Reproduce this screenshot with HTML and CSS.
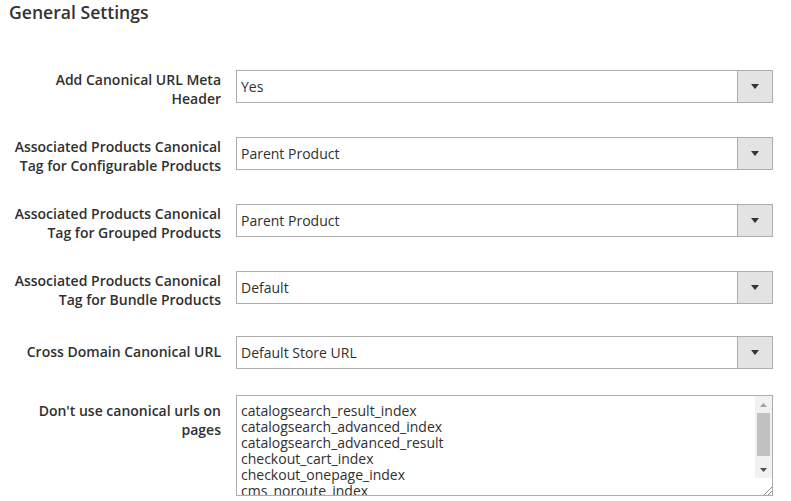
FILE: index.html
```html
<!DOCTYPE html>
<html lang="en">
<head>
  <meta charset="UTF-8" />
  <title>General Settings</title>
  <link rel="stylesheet" href="styles.css">
</head>
<body>
  <h2 class="section-title">General Settings</h2>

  <div class="form">
    <div class="row">
      <label class="label">Add Canonical URL Meta Header</label>
      <div class="select">
        <span class="select-value">Yes</span>
        <span class="select-btn"><svg width="8" height="5" viewBox="0 0 8 5"><path d="M0 0h8L4 5z" fill="#333"/></svg></span>
      </div>
    </div>

    <div class="row">
      <label class="label">Associated Products Canonical Tag for Configurable Products</label>
      <div class="select">
        <span class="select-value">Parent Product</span>
        <span class="select-btn"><svg width="8" height="5" viewBox="0 0 8 5"><path d="M0 0h8L4 5z" fill="#333"/></svg></span>
      </div>
    </div>

    <div class="row">
      <label class="label">Associated Products Canonical Tag for Grouped Products</label>
      <div class="select">
        <span class="select-value">Parent Product</span>
        <span class="select-btn"><svg width="8" height="5" viewBox="0 0 8 5"><path d="M0 0h8L4 5z" fill="#333"/></svg></span>
      </div>
    </div>

    <div class="row row-tight">
      <label class="label">Associated Products Canonical Tag for Bundle Products</label>
      <div class="select">
        <span class="select-value">Default</span>
        <span class="select-btn"><svg width="8" height="5" viewBox="0 0 8 5"><path d="M0 0h8L4 5z" fill="#333"/></svg></span>
      </div>
    </div>

    <div class="row">
      <label class="label label-pad">Cross Domain Canonical URL</label>
      <div class="select">
        <span class="select-value">Default Store URL</span>
        <span class="select-btn"><svg width="8" height="5" viewBox="0 0 8 5"><path d="M0 0h8L4 5z" fill="#333"/></svg></span>
      </div>
    </div>

    <div class="row">
      <label class="label label-pad">Don't use canonical urls on pages</label>
      <div class="textarea">
        <div class="textarea-lines">
          <div>catalogsearch_result_index</div>
          <div>catalogsearch_advanced_index</div>
          <div>catalogsearch_advanced_result</div>
          <div>checkout_cart_index</div>
          <div>checkout_onepage_index</div>
          <div>cms_noroute_index</div>
        </div>
        <div class="scrollbar">
          <div class="sb-btn"><svg width="7" height="4" viewBox="0 0 7 4"><path d="M0 4h7L3.5 0z" fill="#a3a3a3"/></svg></div>
          <div class="sb-track"><div class="sb-thumb"></div></div>
          <div class="sb-btn"><svg width="7" height="4" viewBox="0 0 7 4"><path d="M0 0h7L3.5 4z" fill="#505050"/></svg></div>
          <div class="sb-corner"><svg width="10" height="10" viewBox="0 0 10 10"><path d="M2 10L10 2M6 10L10 6" stroke="#8a8a8a" stroke-width="1"/></svg></div>
        </div>
      </div>
    </div>
  </div>
</body>
</html>
```

FILE: styles.css
```css
body {
  margin: 0;
  font-family: "Open Sans", Arial, sans-serif;
  color: #303030;
  background: #fff;
}
.section-title {
  margin: 0;
  padding: 0 0 0 9px;
  font-size: 17.6px;
  font-weight: 600;
  line-height: 24px;
  color: #333;
}
.form {
  padding-top: 46px;
}
.row {
  display: flex;
  align-items: flex-start;
  gap: 15px;
  margin-bottom: 26px;
}
.row-tight {
  margin-bottom: 24px;
}
.label {
  width: 212px;
  margin-left: 9px;
  text-align: right;
  font-size: 14px;
  font-weight: 600;
  line-height: 19px;
  padding-bottom: 3px;
}
.label-pad {
  padding-top: 6px;
}
.select {
  width: 537px;
  height: 33px;
  box-sizing: border-box;
  display: flex;
  border: 1px solid #adadad;
  font-size: 14px;
}
.select-value {
  flex: 1;
  padding-left: 4px;
  line-height: 31px;
}
.select-btn {
  width: 34px;
  background: #e3e3e3;
  border-left: 1px solid #adadad;
  display: flex;
  align-items: center;
  justify-content: center;
}
.textarea {
  width: 537px;
  height: 101px;
  box-sizing: border-box;
  display: flex;
  border: 1px solid #adadad;
}
.textarea-lines {
  flex: 1;
  overflow: hidden;
  padding: 7px 4px 0;
  font-size: 14px;
  line-height: 16px;
}
.scrollbar {
  width: 17px;
  display: flex;
  flex-direction: column;
  background: #f1f1f1;
}
.sb-btn {
  height: 17px;
  display: flex;
  align-items: center;
  justify-content: center;
}
.sb-track {
  flex: 1;
  padding: 0 2px;
}
.sb-thumb {
  height: 43px;
  background: #c1c1c1;
}
.sb-corner {
  height: 17px;
  background: #fff;
  display: flex;
  align-items: flex-end;
  justify-content: flex-end;
}
```
